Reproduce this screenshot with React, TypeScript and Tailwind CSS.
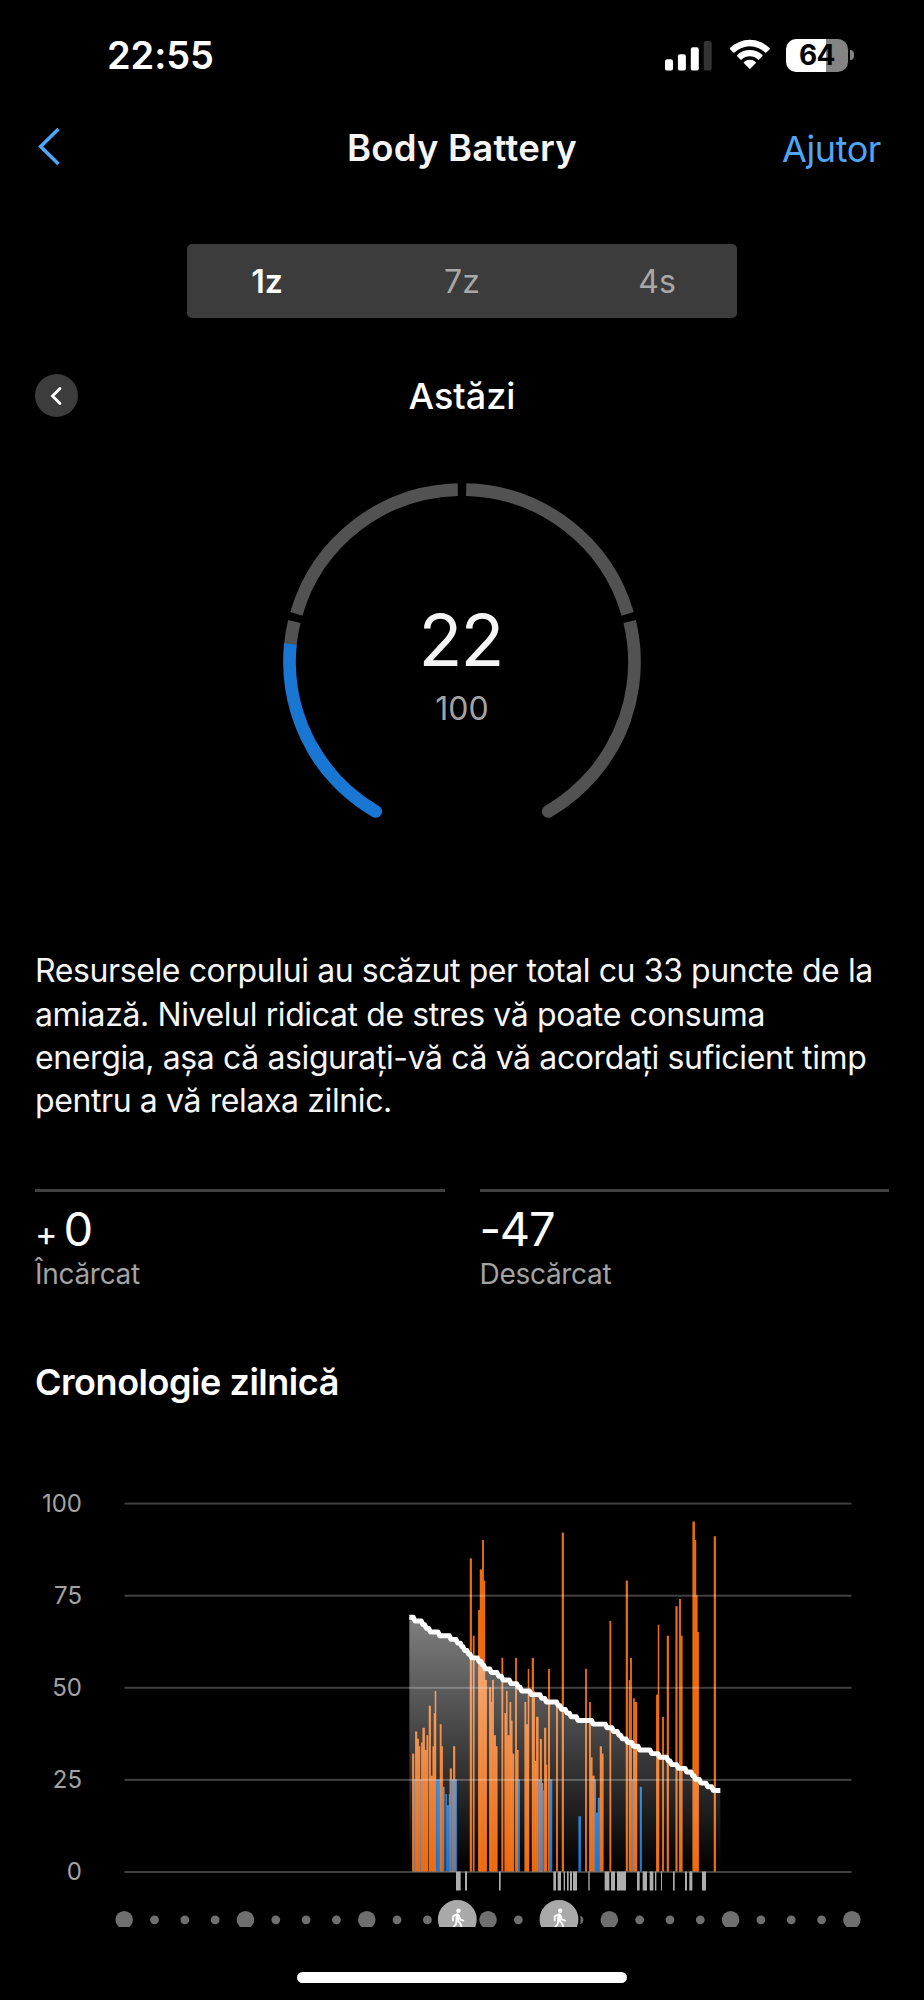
import React from 'react';

type Tone = 'stress' | 'rest' | 'mixed';

// [start, end, level, tone] - start and end are thirds of a pixel from the first sample
type Bar = [number, number, number, Tone];

const TONES: Record<Tone, string> = {
  stress: '#f06c10',
  rest: '#1976d2',
  mixed: '#7f7884',
};

const BARS: Bar[] = [
  [37, 42, 32, 'stress'],
  [42, 46, 25, 'mixed'],
  [46, 51, 38, 'stress'],
  [51, 56, 36, 'stress'],
  [56, 60, 34, 'stress'],
  [60, 64, 25, 'mixed'],
  [64, 68, 35, 'stress'],
  [68, 74, 39, 'stress'],
  [74, 80, 33, 'stress'],
  [80, 84, 37, 'stress'],
  [87, 92, 45, 'stress'],
  [92, 98, 26, 'stress'],
  [98, 102, 34, 'stress'],
  [102, 105, 43, 'stress'],
  [105, 108, 49, 'stress'],
  [108, 120, 25, 'rest'],
  [120, 124, 40, 'stress'],
  [124, 128, 34, 'stress'],
  [128, 133, 23, 'mixed'],
  [137, 140, 21, 'rest'],
  [140, 147, 18, 'rest'],
  [147, 150, 21, 'rest'],
  [150, 155, 28, 'stress'],
  [150, 155, 25, 'mixed'],
  [155, 160, 25, 'rest'],
  [160, 165, 34, 'stress'],
  [157, 168, 25, 'mixed'],
  [168, 170, 25, 'rest'],
  [210, 215, 85, 'stress'],
  [219, 223, 64, 'stress'],
  [235, 240, 71, 'stress'],
  [240, 247, 82, 'stress'],
  [247, 251, 90, 'stress'],
  [251, 255, 79, 'stress'],
  [255, 260, 52, 'stress'],
  [268, 273, 50, 'stress'],
  [273, 277, 46, 'stress'],
  [277, 281, 52, 'stress'],
  [281, 287, 37, 'stress'],
  [287, 292, 34, 'stress'],
  [305, 309, 58, 'stress'],
  [314, 319, 43, 'stress'],
  [319, 322, 49, 'stress'],
  [322, 329, 37, 'stress'],
  [329, 333, 46, 'stress'],
  [333, 337, 41, 'stress'],
  [337, 342, 32, 'stress'],
  [346, 350, 58, 'stress'],
  [350, 355, 33, 'stress'],
  [355, 359, 25, 'rest'],
  [374, 378, 46, 'stress'],
  [378, 384, 40, 'stress'],
  [384, 387, 55, 'stress'],
  [396, 401, 58, 'stress'],
  [401, 404, 49, 'stress'],
  [404, 409, 30, 'stress'],
  [409, 415, 42, 'stress'],
  [415, 420, 25, 'mixed'],
  [420, 425, 36, 'stress'],
  [420, 425, 25, 'mixed'],
  [425, 429, 24, 'mixed'],
  [429, 433, 22, 'rest'],
  [433, 438, 39, 'stress'],
  [438, 441, 29, 'stress'],
  [445, 449, 55, 'stress'],
  [449, 456, 25, 'rest'],
  [469, 473, 45, 'stress'],
  [486, 491, 92, 'stress'],
  [536, 542, 15, 'rest'],
  [556, 560, 55, 'stress'],
  [568, 572, 46, 'stress'],
  [572, 577, 31, 'stress'],
  [577, 583, 26, 'stress'],
  [583, 587, 25, 'mixed'],
  [587, 594, 16, 'rest'],
  [594, 600, 20, 'rest'],
  [600, 605, 34, 'stress'],
  [605, 610, 32, 'stress'],
  [629, 633, 68, 'stress'],
  [678, 683, 79, 'stress'],
  [687, 691, 52, 'stress'],
  [691, 695, 58, 'stress'],
  [695, 700, 25, 'mixed'],
  [700, 704, 47, 'stress'],
  [704, 711, 46, 'stress'],
  [720, 725, 23, 'rest'],
  [769, 774, 48, 'stress'],
  [774, 777, 67, 'stress'],
  [787, 791, 42, 'stress'],
  [801, 806, 64, 'stress'],
  [827, 832, 72, 'stress'],
  [838, 842, 74, 'stress'],
  [842, 847, 64, 'stress'],
  [878, 884, 95, 'stress'],
  [884, 888, 90, 'stress'],
  [888, 892, 75, 'stress'],
  [892, 896, 65, 'stress'],
  [942, 947, 91, 'stress'],
];

// where the battery drops by one, starting at 69
const DROPS = [
  42, 66, 76, 88, 116, 150, 170, 183, 191, 203, 212, 234, 245, 253, 271, 293,
  306, 330, 352, 362, 391, 422, 436, 472, 482, 498, 510, 531, 577, 618, 638,
  654, 664, 680, 697, 716, 752, 776, 802, 812, 832, 857, 875, 884, 900, 920,
  937,
];

const MOTION: [number, number][] = [
  [168, 182],
  [195, 201],
  [297, 302],
  [460, 468],
  [473, 483],
  [491, 495],
  [501, 506],
  [510, 516],
  [519, 531],
  [565, 569],
  [614, 628],
  [633, 645],
  [651, 678],
  [711, 719],
  [728, 741],
  [749, 760],
  [765, 769],
  [783, 786],
  [819, 824],
  [855, 861],
  [868, 877],
  [906, 918],
];

const LEVELS = [100, 75, 50, 25, 0];
const BASE = 414.5;
const toX = (t: number) => 318 + t / 3;
const toY = (level: number) => BASE - level * 3.684;

const buildLine = () => {
  let d = `M${toX(28)} ${toY(69)}`;
  DROPS.forEach((t, i) => {
    d += `L${toX(t - 2)} ${toY(69 - i)}L${toX(t + 3)} ${toY(68 - i)}`;
  });
  return `${d}L${toX(961)} ${toY(22)}`;
};

const LINE = buildLine();

const StatusBar = () => (
  <div className="flex h-[111px] items-center justify-between pl-[107px] pr-[70px]">
    <span className="-mt-[1px] text-[38px] leading-none font-semibold tracking-[-0.1px] text-white">
      22:55
    </span>
    <div className="flex items-center">
      <svg width="48" height="30" viewBox="0 0 48 30" className="mr-4">
        <rect x="0" y="18.3" width="8" height="11.3" rx="2.2" fill="#fff" />
        <rect x="12.9" y="13.3" width="8" height="16.3" rx="2.2" fill="#fff" />
        <rect x="25.8" y="6.3" width="8" height="23.3" rx="2.2" fill="#fff" />
        <rect x="38.7" y="0" width="8" height="29.6" rx="2.2" fill="#333" />
      </svg>
      <svg
        width="42"
        height="31"
        viewBox="0 0 42 31"
        className="-mt-[2px] mr-[15.5px]"
      >
        <path
          d="M1 8.9a28.3 28.3 0 0 1 39.6 0.1c.4.4.4 .8 0 1.2l-3.3 3.3c-.4.4-.8.4-1.2 0a22 22 0 0 0-30.6 0c-.4.4-.8.4-1.2 0L1 10.2c-.4-.4-.4-.9 0-1.3z"
          fill="#fff"
        />
        <path
          d="M8.2 16.1a18 18 0 0 1 25.2 0c.4.4.4.8 0 1.2l-3.3 3.3c-.4.4-.8.4-1.2 0a11.6 11.6 0 0 0-16.2 0c-.4.4-.8.4-1.2 0l-3.3-3.3c-.4-.4-.4-.8 0-1.2z"
          fill="#fff"
        />
        <path
          d="M15 23a8.6 8.6 0 0 1 11.6 0c.5.4.5.8.1 1.2l-5.2 5.4c-.4.4-.8.4-1.2 0l-5.3-5.4c-.4-.4-.4-.8 0-1.2z"
          fill="#fff"
        />
      </svg>
      <div className="-mt-[1px] flex h-[33px] w-[62px] items-center justify-center rounded-[10px] bg-linear-to-r from-white from-64% to-[#848484] to-64%">
        <span className="text-[28px] leading-none font-bold tracking-[-0.5px] text-black">
          64
        </span>
      </div>
      <div className="-mt-[1px] ml-[2px] h-[10px] w-[4px] rounded-r-full bg-[#848484]" />
    </div>
  </div>
);

const Header = () => (
  <div className="grid h-[75px] grid-cols-3 items-center pr-[43px] pl-[38px]">
    <svg width="23" height="39" viewBox="0 0 23 39" className="-mt-[5px]">
      <path
        d="M20.5 2 2.7 19.5 20.5 37"
        fill="none"
        stroke="#4fa5f8"
        strokeWidth="3.6"
      />
    </svg>
    <h1 className="pl-[5px] text-center text-[36.5px] leading-none font-semibold tracking-[0.2px] whitespace-nowrap text-[#f5f5f5]">
      Body Battery
    </h1>
    <a className="text-right text-[36px] leading-none tracking-[-0.4px] text-[#4fa5f8]">
      Ajutor
    </a>
  </div>
);

const RangeTabs = () => (
  <div className="mx-auto mt-[58px] flex h-[74px] w-[550px] shrink-0 items-center justify-center rounded-[5px] bg-[#3c3c3c] pt-[1px] text-[32px] leading-none text-[#a8a8a8]">
    <span className="w-[195px] shrink-0 text-center font-semibold text-white">
      1z
    </span>
    <span className="w-[195px] shrink-0 text-center">7z</span>
    <span className="w-[195px] shrink-0 text-center">4s</span>
  </div>
);

const DayPicker = () => (
  <div className="mt-[56px] grid h-[44px] grid-cols-[44px_1fr_44px] items-center px-[34.5px]">
    <button className="-mt-[1px] flex size-[43px] items-center justify-center rounded-full bg-[#3c3c3c]">
      <svg width="12" height="20" viewBox="0 0 12 20">
        <path
          d="M10 2.5 2.5 10 10 17.5"
          fill="none"
          stroke="#fff"
          strokeWidth="2.8"
          strokeLinecap="round"
        />
      </svg>
    </button>
    <h2 className="text-center text-[36px] leading-none font-medium text-white">
      Astăzi
    </h2>
  </div>
);

// angle in degrees clockwise from the top
const arc = (from: number, to: number) => {
  const r = 172.5;
  const at = (deg: number) => {
    const a = (deg * Math.PI) / 180;
    return `${180 + r * Math.sin(a)} ${180 - r * Math.cos(a)}`;
  };
  return `M${at(from)}A${r} ${r} 0 0 1 ${at(to)}`;
};

const Gauge = () => (
  <div className="mx-auto mt-[64.4px] grid h-[360px] w-[360px] shrink-0">
    <svg
      viewBox="0 0 360 360"
      className="col-start-1 row-start-1 size-[360px]"
      fill="none"
      strokeWidth="12.7"
    >
      <path d={arc(-84.2, -76.4)} stroke="#525252" />
      <path d={arc(-73.8, -1.4)} stroke="#525252" />
      <path d={arc(1.4, 73.8)} stroke="#525252" />
      <path d={arc(76.4, 120)} stroke="#525252" />
      <path d={arc(110, 150)} stroke="#525252" strokeLinecap="round" />
      <path d={arc(-150, -120)} stroke="#1976d2" strokeLinecap="round" />
      <path d={arc(-130, -84)} stroke="#1976d2" />
    </svg>
    <div className="col-start-1 row-start-1 flex flex-col items-center pt-[122px]">
      <span className="pr-[3px] text-[72px] leading-[72px] tracking-[-2px] text-[#f5f5f5]">
        22
      </span>
      <span className="mt-[15px] text-[32px] leading-[36px] text-[#a3a3a3]">
        100
      </span>
    </div>
  </div>
);

const Totals = () => (
  <div className="mt-[67px] grid grid-cols-2 gap-[35px] pr-[35px] pl-[35px]">
    <div className="border-t-[3px] border-[#404040] pt-[14px]">
      <div className="flex h-[46px] items-baseline text-white">
        <span className="text-[34px] leading-[46px] tracking-[-1px]">+</span>
        <span className="ml-[7px] text-[47px] leading-[46px]">0</span>
      </div>
      <div className="mt-[5px] text-[28px] leading-[34px] tracking-[-0.3px] text-[#a3a3a3]">
        Încărcat
      </div>
    </div>
    <div className="border-t-[3px] border-[#404040] pt-[14px]">
      <div className="h-[46px] text-[47px] leading-[46px] tracking-[-1.3px] text-white">
        -47
      </div>
      <div className="mt-[5px] text-[28px] leading-[34px] tracking-[-0.3px] text-[#a3a3a3]">
        Descărcat
      </div>
    </div>
  </div>
);

const Walker = ({ x }: { x: number }) => (
  <g transform={`translate(${x} 462.4)`}>
    <circle r="20.5" fill="#a9a9a9" stroke="#000" strokeWidth="2.2" />
    <circle cx="1.2" cy="-8.7" r="2.2" fill="#fff" />
    <path
      d="M-.3-5.2-4.3-3v4M.3-5 .5 1.2M1.5-4 3 .2l3 1M-.6.8-1.5 5l-4 4.5M.5 1l3 4L4.5 10"
      fill="none"
      stroke="#fff"
      strokeWidth="1.8"
      strokeLinecap="round"
      strokeLinejoin="round"
    />
    <path d="M-1.5-5.5h3L1.7 1.5h-3.5z" fill="#fff" />
  </g>
);

const Timeline = () => (
  <div className="mt-[53px] flex h-[470px] shrink-0">
    <div className="w-[82px] shrink-0 pt-[0.5px] text-right text-[24px] text-[#a3a3a3]">
      {LEVELS.map((level) => (
        <div key={level} className="h-[92.1px] leading-[92.1px]">
          {level}
        </div>
      ))}
    </div>
    <svg width="842" height="470" viewBox="0 0 842 470">
      <defs>
        <linearGradient
          id="charge"
          gradientUnits="userSpaceOnUse"
          x1="0"
          y1={toY(69)}
          x2="0"
          y2={BASE}
        >
          <stop offset="0" stopColor="#fff" stopOpacity="0.5" />
          <stop offset="1" stopColor="#fff" stopOpacity="0" />
        </linearGradient>
      </defs>
      {BARS.map(([start, end, level, tone], index) => (
        <rect
          key={index}
          x={toX(start) - 0.25}
          y={toY(level)}
          width={(end - start) / 3 + 0.5}
          height={BASE - toY(level)}
          fill={TONES[tone]}
        />
      ))}
      <path d={`${LINE}V${BASE}H${toX(28)}Z`} fill="url(#charge)" />
      {LEVELS.map((level) => (
        <rect
          key={level}
          x="42.5"
          y={toY(level) - 0.5}
          width="727"
          height="2"
          fill="#fff"
          fillOpacity="0.25"
        />
      ))}
      <path
        d={LINE}
        fill="none"
        stroke="#fff"
        strokeWidth="4.9"
        strokeLinejoin="round"
      />
      {MOTION.map(([start, end]) => (
        <rect
          key={start}
          x={toX(start)}
          y={BASE}
          width={(end - start) / 3}
          height="19"
          fill="#adadad"
        />
      ))}
      {/* one dot for each hour */}
      {Array.from({ length: 25 }, (_, hour) => (
        <circle
          key={hour}
          cx={42.2 + hour * 30.32}
          cy="462.8"
          r={hour % 4 === 0 ? 8.8 : 4.4}
          fill="#6f6f6f"
        />
      ))}
      <Walker x={375.3} />
      <Walker x={477} />
    </svg>
  </div>
);

const App = () => {
  return (
    <div className="flex h-[2000px] w-[924px] flex-col overflow-hidden bg-black font-['Inter','Liberation_Sans',sans-serif]">
      <StatusBar />
      <Header />
      <RangeTabs />
      <DayPicker />
      <Gauge />
      <p className="mt-[107px] pl-[35px] text-[32px] leading-[43.2px] tracking-[-0.39px] whitespace-nowrap text-[#f5f5f5]">
        Resursele corpului au scăzut per total cu 33 puncte de la
        <br />
        amiază. Nivelul ridicat de stres vă poate consuma
        <br />
        energia, așa că asigurați-vă că vă acordați suficient timp
        <br />
        pentru a vă relaxa zilnic.
      </p>
      <Totals />
      <h2 className="mt-[69px] pl-[35px] text-[36px] leading-[44px] font-semibold tracking-[-0.46px] text-white">
        Cronologie zilnică
      </h2>
      <Timeline />
      <div className="mx-auto mt-[45px] h-[11px] w-[330px] shrink-0 rounded-full bg-white" />
    </div>
  );
};

export default App;
